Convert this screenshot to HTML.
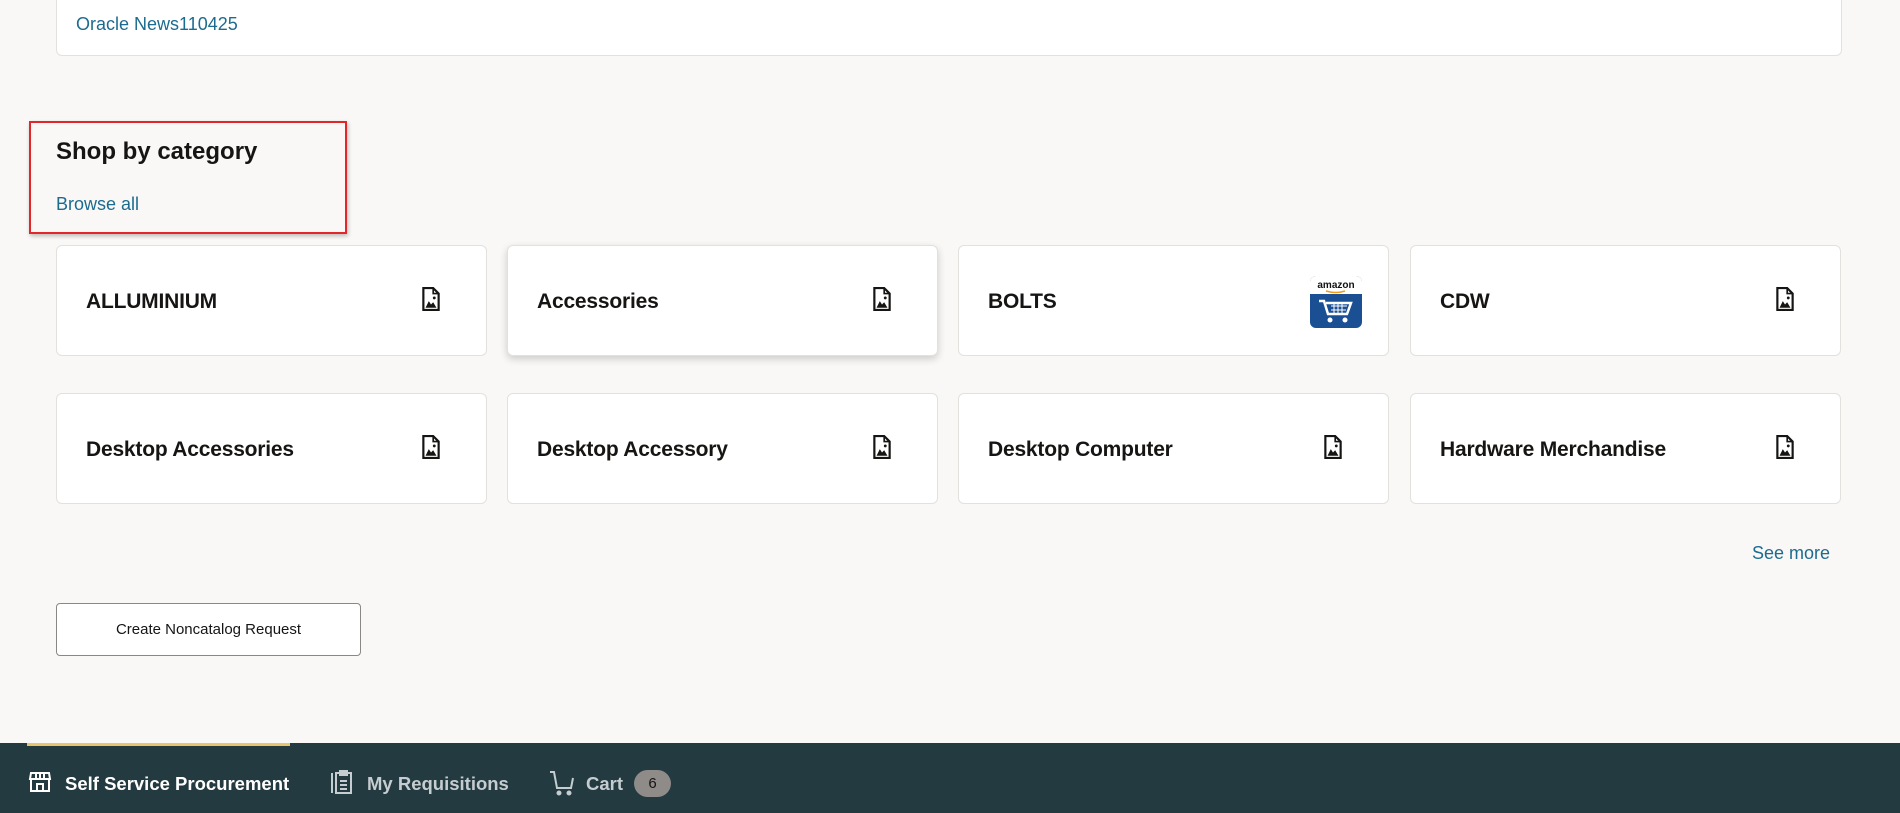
<!DOCTYPE html>
<html><head><meta charset="utf-8"><style>
*{box-sizing:border-box;margin:0;padding:0}
body{width:1900px;height:813px;background:#f9f8f6;font-family:"Liberation Sans",sans-serif;position:relative;overflow:hidden;color:#161513}
.a{color:#1d6b8f;text-decoration:none;position:absolute}
.top{position:absolute;left:56px;top:-10px;width:1786px;height:66px;background:#fff;border:1px solid #e3e1dd;border-radius:6px}
.red{position:absolute;left:29px;top:121px;width:318px;height:113px;border:2px solid #e3262a;box-shadow:1px 2px 4px rgba(0,0,0,.25)}
.tile{position:absolute;width:431px;height:111px;background:#fff;border:1px solid #e3e1dd;border-radius:6px}
.tile span{position:absolute;left:29px;top:44px;font-size:21px;font-weight:bold;letter-spacing:-0.2px}
.tile svg.i{position:absolute;right:45px;top:41px}
.btn{position:absolute;left:56px;top:603px;width:305px;height:53px;border:1px solid #8a8784;border-radius:4px;background:#fff;font-size:15px;text-align:center;line-height:51px}
.foot{position:absolute;left:0;top:743px;width:1900px;height:70px;background:#233a40}
.ft{position:absolute;top:30px;font-size:18.5px;font-weight:bold;color:#c5cdd0}
</style></head><body>
<div class="top"><a class="a" style="left:19px;top:23px;font-size:18px">Oracle News110425</a></div>
<div class="red"></div>
<div style="position:absolute;left:56px;top:138px;font-size:24px;font-weight:bold">Shop by category</div>
<a class="a" style="left:56px;top:194px;font-size:18px">Browse all</a>

<svg width="0" height="0" style="position:absolute"><defs><symbol id="doc" viewBox="0 0 18 22"><path d="M2 1h9l5 5v15H2z" fill="none" stroke="#161513" stroke-width="2"/><path d="M11 1v5h5" fill="none" stroke="#161513" stroke-width="1.5"/><path d="M4 19l3-6 2 3 2-2 3 5z" fill="#161513"/><circle cx="12" cy="10" r="1.3" fill="#161513"/></symbol></defs></svg>

<div class="tile" style="left:56px;top:245px"><span>ALLUMINIUM</span><svg class="i" width="20" height="24"><use href="#doc"/></svg></div>
<div class="tile" style="left:507px;top:245px;box-shadow:0 3px 8px rgba(0,0,0,.18)"><span>Accessories</span><svg class="i" width="20" height="24"><use href="#doc"/></svg></div>
<div class="tile" style="left:958px;top:245px"><span>BOLTS</span>
<svg style="position:absolute;left:350px;top:29px" width="54" height="54" viewBox="0 0 54 54"><rect x="1" y="1" width="52" height="52" rx="6" fill="#1a4f94"/><path d="M1 7a6 6 0 0 1 6-6h40a6 6 0 0 1 6 6v12H1z" fill="#fff"/><text x="27" y="13" font-size="10" font-weight="bold" text-anchor="middle" font-family="Liberation Sans" fill="#111">amazon</text><path d="M17 16q10 3 19 0" stroke="#f29b1a" stroke-width="1.5" fill="none"/><path d="M10 26h5l4 13h19l4-11H17" stroke="#fff" stroke-width="2.5" fill="none"/><path d="M22 31h16M22 35h15M25 29v9M29 29v9M33 29v9" stroke="#fff" stroke-width="1"/><circle cx="21" cy="45" r="2.5" fill="#fff"/><circle cx="36" cy="45" r="2.5" fill="#fff"/></svg></div>
<div class="tile" style="left:1410px;top:245px"><span>CDW</span><svg class="i" width="20" height="24"><use href="#doc"/></svg></div>

<div class="tile" style="left:56px;top:393px"><span>Desktop Accessories</span><svg class="i" width="20" height="24"><use href="#doc"/></svg></div>
<div class="tile" style="left:507px;top:393px"><span>Desktop Accessory</span><svg class="i" width="20" height="24"><use href="#doc"/></svg></div>
<div class="tile" style="left:958px;top:393px"><span>Desktop Computer</span><svg class="i" width="20" height="24"><use href="#doc"/></svg></div>
<div class="tile" style="left:1410px;top:393px"><span>Hardware Merchandise</span><svg class="i" width="20" height="24"><use href="#doc"/></svg></div>

<a class="a" style="left:1752px;top:543px;font-size:18px">See more</a>
<div class="btn">Create Noncatalog Request</div>

<div class="foot">
<div style="position:absolute;left:27px;top:0;width:263px;height:3px;background:#e9c46a"></div>
<svg style="position:absolute;left:28px;top:27px" width="24" height="24" viewBox="0 0 24 24" fill="none" stroke="#fff" stroke-width="2"><path d="M3 3h18l1 6H2z"/><path d="M3 9v12h18V9"/><path d="M9 21v-7h6v7"/><path d="M8 3v6M12 3v6M16 3v6"/></svg>
<div class="ft" style="left:65px;color:#fff">Self Service Procurement</div>
<svg style="position:absolute;left:330px;top:26px" width="24" height="26" viewBox="0 0 24 26" fill="none" stroke="#c5cdd0" stroke-width="2"><path d="M2 4v20"/><rect x="6" y="4" width="15" height="20"/><path d="M10 2h7v4h-7z"/><path d="M10 12h7M10 16h7M10 20h7"/></svg>
<div class="ft" style="left:367px">My Requisitions</div>
<svg style="position:absolute;left:549px;top:27px" width="26" height="26" viewBox="0 0 26 26" fill="none" stroke="#c5cdd0" stroke-width="2"><path d="M1 2h4l3 16h14l2-10"/><circle cx="10" cy="23" r="1.5" fill="#c5cdd0"/><circle cx="20" cy="23" r="1.5" fill="#c5cdd0"/></svg>
<div class="ft" style="left:586px">Cart</div>
<div style="position:absolute;left:634px;top:27px;width:37px;height:27px;border-radius:14px;background:#8e8b88;color:#161513;font-size:15px;text-align:center;line-height:27px">6</div>
</div>
</body></html>
